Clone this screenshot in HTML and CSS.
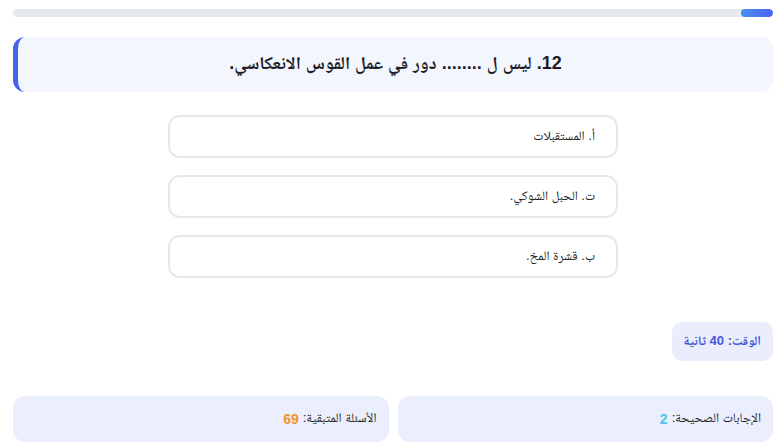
FILE: index.html
```html
<!DOCTYPE html>
<html lang="ar" dir="rtl">
<head>
<meta charset="utf-8">
<title>اختبار</title>
<link rel="stylesheet" href="styles.css">
</head>
<body>
<div class="app">
  <div class="progress"><div class="progress-fill" style="width:4.2%"></div></div>
  <div class="question">12. ليس ل ........ دور في عمل القوس الانعكاسي.</div>
  <div class="options">
    <div class="option">أ. المستقبلات</div>
    <div class="option">ت. الحبل الشوكي.</div>
    <div class="option">ب. قشرة المخ.</div>
  </div>
  <div class="timer-row">
    <div class="timer">الوقت: 40 ثانية</div>
  </div>
  <div class="stats">
    <div class="stat">الإجابات الصحيحة: <span class="num num-correct">2</span></div>
    <div class="stat">الأسئلة المتبقية: <span class="num num-left">69</span></div>
  </div>
</div>
</body>
</html>
```

FILE: styles.css
```css
* { box-sizing: border-box; }
html, body { margin: 0; background: #ffffff; }
body {
  font-family: "Liberation Sans", "Noto Naskh Arabic", sans-serif;
  color: #222;
}
.app {
  padding: 9px 9px 0 13px;
  display: flex;
  flex-direction: column;
}
.progress {
  height: 8px;
  background: #e6e9ee;
  border-radius: 4px;
  display: flex;
  justify-content: flex-start;
  overflow: hidden;
}
.progress-fill {
  height: 100%;
  border-radius: 4px;
  background: linear-gradient(to left, #4a64f0, #4b8ef0);
}
.question {
  margin-top: 20px;
  height: 55px;
  background: #f3f6fd;
  border-left: 5px solid #4663ee;
  border-radius: 12px;
  display: flex;
  align-items: center;
  justify-content: center;
  font-size: 18px;
  font-weight: bold;
  color: #1e1e2a;
  padding-top: 1px;
}
.options {
  margin-top: 23px;
  display: flex;
  flex-direction: column;
  align-items: center;
  gap: 17px;
}
.option {
  width: 450px;
  height: 43px;
  border: 2px solid #e6e8ec;
  border-radius: 12px;
  display: flex;
  align-items: center;
  padding: 0 21px;
  font-size: 13px;
  color: #222;
}
.timer-row {
  margin-top: 44px;
  display: flex;
}
.timer {
  height: 39px;
  padding: 0 12px 0 11px;
  background: #e9edfc;
  border-radius: 10px;
  display: flex;
  align-items: center;
  font-size: 13px;
  font-weight: bold;
  color: #4556d8;
}
.stats {
  margin-top: 35px;
  display: grid;
  grid-template-columns: 1fr 1fr;
  gap: 9px;
}
.stat {
  height: 46px;
  background: #ebeefc;
  border-radius: 12px;
  display: flex;
  align-items: center;
  padding: 0 12px;
  font-size: 13px;
  color: #222;
}
.num {
  font-weight: bold;
  font-size: 14px;
  margin-right: 4px;
}
.num-correct { color: #4fc3ef; }
.num-left { color: #f39526; }
```
